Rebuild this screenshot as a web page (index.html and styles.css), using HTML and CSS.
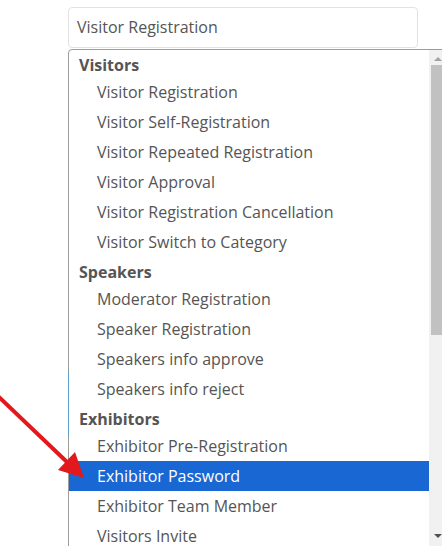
FILE: index.html
```html
<!DOCTYPE html>
<html lang="en">
<head>
    <meta charset="UTF-8">
    <meta name="viewport" content="width=device-width, initial-scale=1.0">
    <title>Notification template</title>
    <link rel="stylesheet" href="styles.css">
</head>
<body>

<div class="select-box">Visitor Registration</div>

<div class="dropdown">
    <ul class="options">
        <li class="group">Visitors</li>
        <li>Visitor Registration</li>
        <li>Visitor Self-Registration</li>
        <li>Visitor Repeated Registration</li>
        <li>Visitor Approval</li>
        <li>Visitor Registration Cancellation</li>
        <li>Visitor Switch to Category</li>
        <li class="group">Speakers</li>
        <li>Moderator Registration</li>
        <li>Speaker Registration</li>
        <li>Speakers info approve</li>
        <li>Speakers info reject</li>
        <li class="group">Exhibitors</li>
        <li>Exhibitor Pre-Registration</li>
        <li class="selected">Exhibitor Password</li>
        <li>Exhibitor Team Member</li>
        <li>Visitors Invite</li>
        <li>Visitors Invite Reminder</li>
    </ul>
    <div class="scrollbar">
        <span class="arrow up"></span>
        <div class="thumb"></div>
        <span class="arrow down"></span>
    </div>
</div>

<!-- red pointer drawn over the screenshot -->
<svg class="pointer" width="442" height="546" viewBox="0 0 442 546">
    <line x1="-2" y1="396" x2="68" y2="463" stroke="#e3181c" stroke-width="4"/>
    <polygon points="84,478 58,470 75,452" fill="#e3181c"/>
</svg>

</body>
</html>
```

FILE: styles.css
```css
body {
    font-family: "Open Sans", "Liberation Sans", sans-serif;
    font-size: 16px;
    color: #555;
    margin: 0;
    padding: 0;
    background-color: #ffffff;
    overflow: hidden;
    height: 546px;
}
.select-box {
    margin: 7px 0 0 68px;
    width: 332px;
    height: 39px;
    line-height: 39px;
    padding: 0 8px;
    border: 1px solid #e2e2e2;
    border-radius: 4px;
}
.dropdown {
    position: relative;
    display: flex;
    margin: 1px 0 0 68px;
    width: 377px;
    height: 520px;
    border: 1px solid #9c9c9c;
    border-top-left-radius: 4px;
    background-color: #ffffff;
}
.dropdown::before {
    /* strip of the page behind showing at the edge */
    content: "";
    position: absolute;
    left: -1px;
    top: 321px;
    width: 1px;
    height: 65px;
    background-color: #5aa3cf;
}
.options {
    list-style: none;
    margin: 0;
    padding: 0;
    flex: 1;
    overflow: hidden;
}
.options li {
    height: 30px;
    line-height: 30px;
    padding-left: 28px;
    white-space: nowrap;
}
.options li.group {
    height: 24px;
    line-height: 24px;
    padding: 3px 0 0 10px;
    font-weight: bold;
}
.options li.selected {
    background-color: #1967d2;
    color: #ffffff;
}
.scrollbar {
    width: 17px;
    background-color: #f1f1f1;
    display: flex;
    flex-direction: column;
    align-items: center;
}
.thumb {
    width: 13px;
    height: 270px;
    margin-top: 4px;
    background-color: #c1c1c1;
}
.arrow {
    width: 0;
    height: 0;
    border-left: 4px solid transparent;
    border-right: 4px solid transparent;
}
.arrow.up {
    margin-top: 7px;
    border-bottom: 4px solid #a3a3a3;
}
.arrow.down {
    margin-top: 199px;
    border-top: 4px solid #505050;
}
.pointer {
    position: absolute;
    left: 0;
    top: 0;
}
```
